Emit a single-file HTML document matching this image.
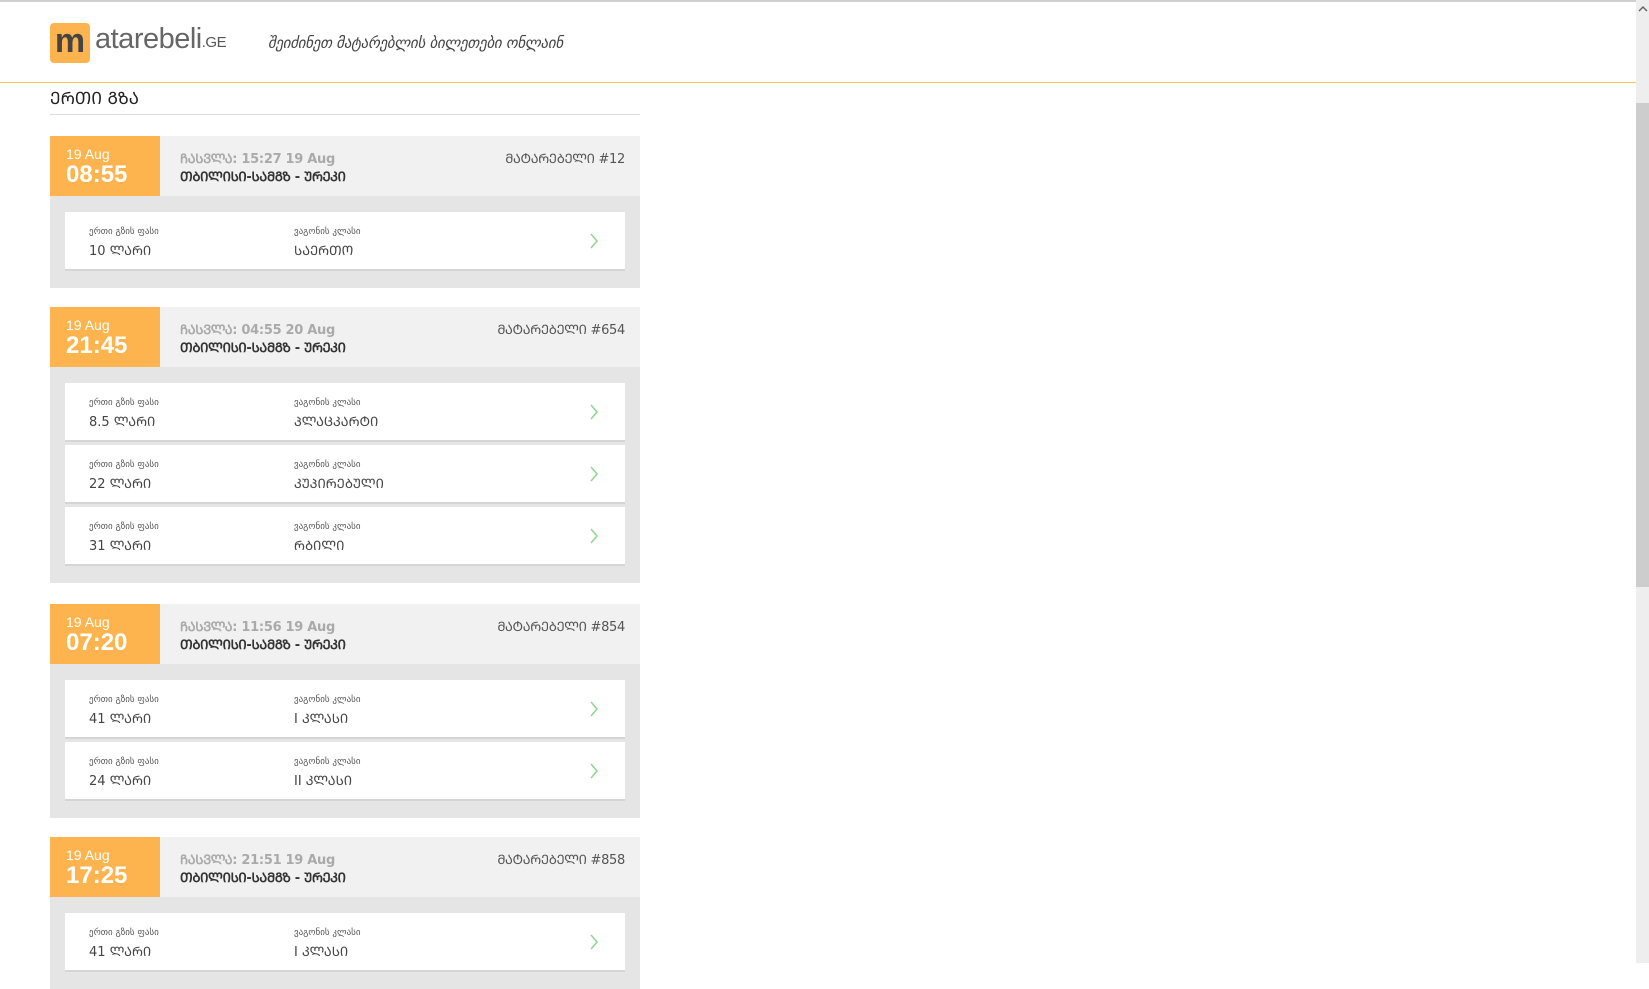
<!DOCTYPE html>
<html><head><meta charset="utf-8"><style>
*{margin:0;padding:0;box-sizing:border-box}
body{width:1649px;height:963px;overflow:hidden;background:#fff;font-family:"Liberation Sans","DejaVu Sans",sans-serif;position:relative}
.topline{position:absolute;left:0;top:0;width:1636px;height:2px;background:#d0d0d0}
.hdr{position:absolute;left:0;top:2px;width:1636px;height:81px;border-bottom:1px solid #fbc45f}
.logo{position:absolute;left:50px;top:21px;width:40px;height:40px;background:#fdb44f;border-radius:4px;color:#444;font-weight:bold;font-size:34px;line-height:36px;text-align:center}
.logot{position:absolute;left:95px;top:21px;font-size:29px;color:#666;font-weight:300;letter-spacing:-0.5px}
.logot b{font-size:15px;color:#555;position:relative;top:-1px}
.tag{position:absolute;left:268px;top:32px;font-size:15px;font-style:italic;color:#444;font-family:"DejaVu Sans",sans-serif;letter-spacing:-0.3px}
.title{position:absolute;left:50px;top:86px;font-size:17px;color:#222;font-family:"DejaVu Sans",sans-serif}
.uline{position:absolute;left:50px;top:114px;width:590px;height:1px;background:#ddd}
.card{position:absolute;left:50px;width:590px;background:#e5e5e5}
.ch{height:60px;background:#f1f1f1;position:relative}
.dt{position:absolute;left:0;top:0;width:110px;height:60px;background:#fdb44f;color:#fff}
.dt .d{position:absolute;left:16px;top:10px;font-size:14px}
.dt .t{position:absolute;left:16px;top:25px;font-size:24px;font-weight:bold}
.dep{position:absolute;left:130px;top:13px;font-size:13px;color:#aaa;font-weight:bold;font-family:"DejaVu Sans",sans-serif;letter-spacing:-0.3px}
.rt{position:absolute;left:130px;top:31px;font-size:13px;color:#333;font-weight:bold;font-family:"DejaVu Sans",sans-serif;letter-spacing:-0.3px}
.tn{position:absolute;right:15px;top:13px;font-size:13px;color:#555;font-family:"DejaVu Sans",sans-serif;letter-spacing:-0.3px}
.cb{padding:16px 15px 17px 15px}
.row{height:59px;background:#fff;border-bottom:2px solid #d5d5d5;position:relative;margin-bottom:3px}
.row:last-child{margin-bottom:0}
.l{position:absolute;top:15px;font-size:9px;color:#555;font-family:"DejaVu Sans",sans-serif}
.v{position:absolute;top:29px;font-size:13px;color:#444;font-family:"DejaVu Sans",sans-serif}
.c1{left:24px}.c2{left:229px}
.arr{position:absolute;left:524px;top:21px}
.sb{position:absolute;left:1636px;top:0;width:13px;height:963px;background:#eee}
.th{position:absolute;left:1636px;top:103px;width:13px;height:484px;background:#cdcdcd}
</style></head><body>
<div class="topline"></div>
<div class="hdr">
<div class="logo">m</div>
<div class="logot">atarebeli<b>.GE</b></div>
<div class="tag">შეიძინეთ მატარებლის ბილეთები ონლაინ</div>
</div>
<div class="title">ᲔᲠᲗᲘ ᲒᲖᲐ</div>
<div class="uline"></div>

<div class="card" style="top:136px">
<div class="ch"><div class="dt"><div class="d">19 Aug</div><div class="t">08:55</div></div>
<div class="dep">ᲩᲐᲡᲕᲚᲐ: 15:27 19 Aug</div><div class="rt">ᲗᲑᲘᲚᲘᲡᲘ-ᲡᲐᲛᲒᲖ - ᲣᲠᲔᲙᲘ</div><div class="tn">ᲛᲐᲢᲐᲠᲔᲑᲔᲚᲘ #12</div></div>
<div class="cb">
<div class="row"><div class="l c1">ერთი გზის ფასი</div><div class="v c1">10 ᲚᲐᲠᲘ</div><div class="l c2">ვაგონის კლასი</div><div class="v c2">ᲡᲐᲔᲠᲗᲝ</div><svg class="arr" width="10" height="16"><path d="M2 1l6 7-6 7" fill="none" stroke="#8dd68d" stroke-width="1.5"/></svg></div>
</div></div>

<div class="card" style="top:307px">
<div class="ch"><div class="dt"><div class="d">19 Aug</div><div class="t">21:45</div></div>
<div class="dep">ᲩᲐᲡᲕᲚᲐ: 04:55 20 Aug</div><div class="rt">ᲗᲑᲘᲚᲘᲡᲘ-ᲡᲐᲛᲒᲖ - ᲣᲠᲔᲙᲘ</div><div class="tn">ᲛᲐᲢᲐᲠᲔᲑᲔᲚᲘ #654</div></div>
<div class="cb">
<div class="row"><div class="l c1">ერთი გზის ფასი</div><div class="v c1">8.5 ᲚᲐᲠᲘ</div><div class="l c2">ვაგონის კლასი</div><div class="v c2">ᲞᲚᲐᲪᲙᲐᲠᲢᲘ</div><svg class="arr" width="10" height="16"><path d="M2 1l6 7-6 7" fill="none" stroke="#8dd68d" stroke-width="1.5"/></svg></div>
<div class="row"><div class="l c1">ერთი გზის ფასი</div><div class="v c1">22 ᲚᲐᲠᲘ</div><div class="l c2">ვაგონის კლასი</div><div class="v c2">ᲙᲣᲞᲘᲠᲔᲑᲣᲚᲘ</div><svg class="arr" width="10" height="16"><path d="M2 1l6 7-6 7" fill="none" stroke="#8dd68d" stroke-width="1.5"/></svg></div>
<div class="row"><div class="l c1">ერთი გზის ფასი</div><div class="v c1">31 ᲚᲐᲠᲘ</div><div class="l c2">ვაგონის კლასი</div><div class="v c2">ᲠᲑᲘᲚᲘ</div><svg class="arr" width="10" height="16"><path d="M2 1l6 7-6 7" fill="none" stroke="#8dd68d" stroke-width="1.5"/></svg></div>
</div></div>

<div class="card" style="top:604px">
<div class="ch"><div class="dt"><div class="d">19 Aug</div><div class="t">07:20</div></div>
<div class="dep">ᲩᲐᲡᲕᲚᲐ: 11:56 19 Aug</div><div class="rt">ᲗᲑᲘᲚᲘᲡᲘ-ᲡᲐᲛᲒᲖ - ᲣᲠᲔᲙᲘ</div><div class="tn">ᲛᲐᲢᲐᲠᲔᲑᲔᲚᲘ #854</div></div>
<div class="cb">
<div class="row"><div class="l c1">ერთი გზის ფასი</div><div class="v c1">41 ᲚᲐᲠᲘ</div><div class="l c2">ვაგონის კლასი</div><div class="v c2">I ᲙᲚᲐᲡᲘ</div><svg class="arr" width="10" height="16"><path d="M2 1l6 7-6 7" fill="none" stroke="#8dd68d" stroke-width="1.5"/></svg></div>
<div class="row"><div class="l c1">ერთი გზის ფასი</div><div class="v c1">24 ᲚᲐᲠᲘ</div><div class="l c2">ვაგონის კლასი</div><div class="v c2">II ᲙᲚᲐᲡᲘ</div><svg class="arr" width="10" height="16"><path d="M2 1l6 7-6 7" fill="none" stroke="#8dd68d" stroke-width="1.5"/></svg></div>
</div></div>

<div class="card" style="top:837px">
<div class="ch"><div class="dt"><div class="d">19 Aug</div><div class="t">17:25</div></div>
<div class="dep">ᲩᲐᲡᲕᲚᲐ: 21:51 19 Aug</div><div class="rt">ᲗᲑᲘᲚᲘᲡᲘ-ᲡᲐᲛᲒᲖ - ᲣᲠᲔᲙᲘ</div><div class="tn">ᲛᲐᲢᲐᲠᲔᲑᲔᲚᲘ #858</div></div>
<div class="cb">
<div class="row"><div class="l c1">ერთი გზის ფასი</div><div class="v c1">41 ᲚᲐᲠᲘ</div><div class="l c2">ვაგონის კლასი</div><div class="v c2">I ᲙᲚᲐᲡᲘ</div><svg class="arr" width="10" height="16"><path d="M2 1l6 7-6 7" fill="none" stroke="#8dd68d" stroke-width="1.5"/></svg></div>
</div></div>

<div class="sb"></div><div class="th"></div>
<svg style="position:absolute;left:1638px;top:5px" width="10" height="8"><path d="M1 6l4-4 4 4" fill="none" stroke="#666" stroke-width="1.5"/></svg>
</body></html>
